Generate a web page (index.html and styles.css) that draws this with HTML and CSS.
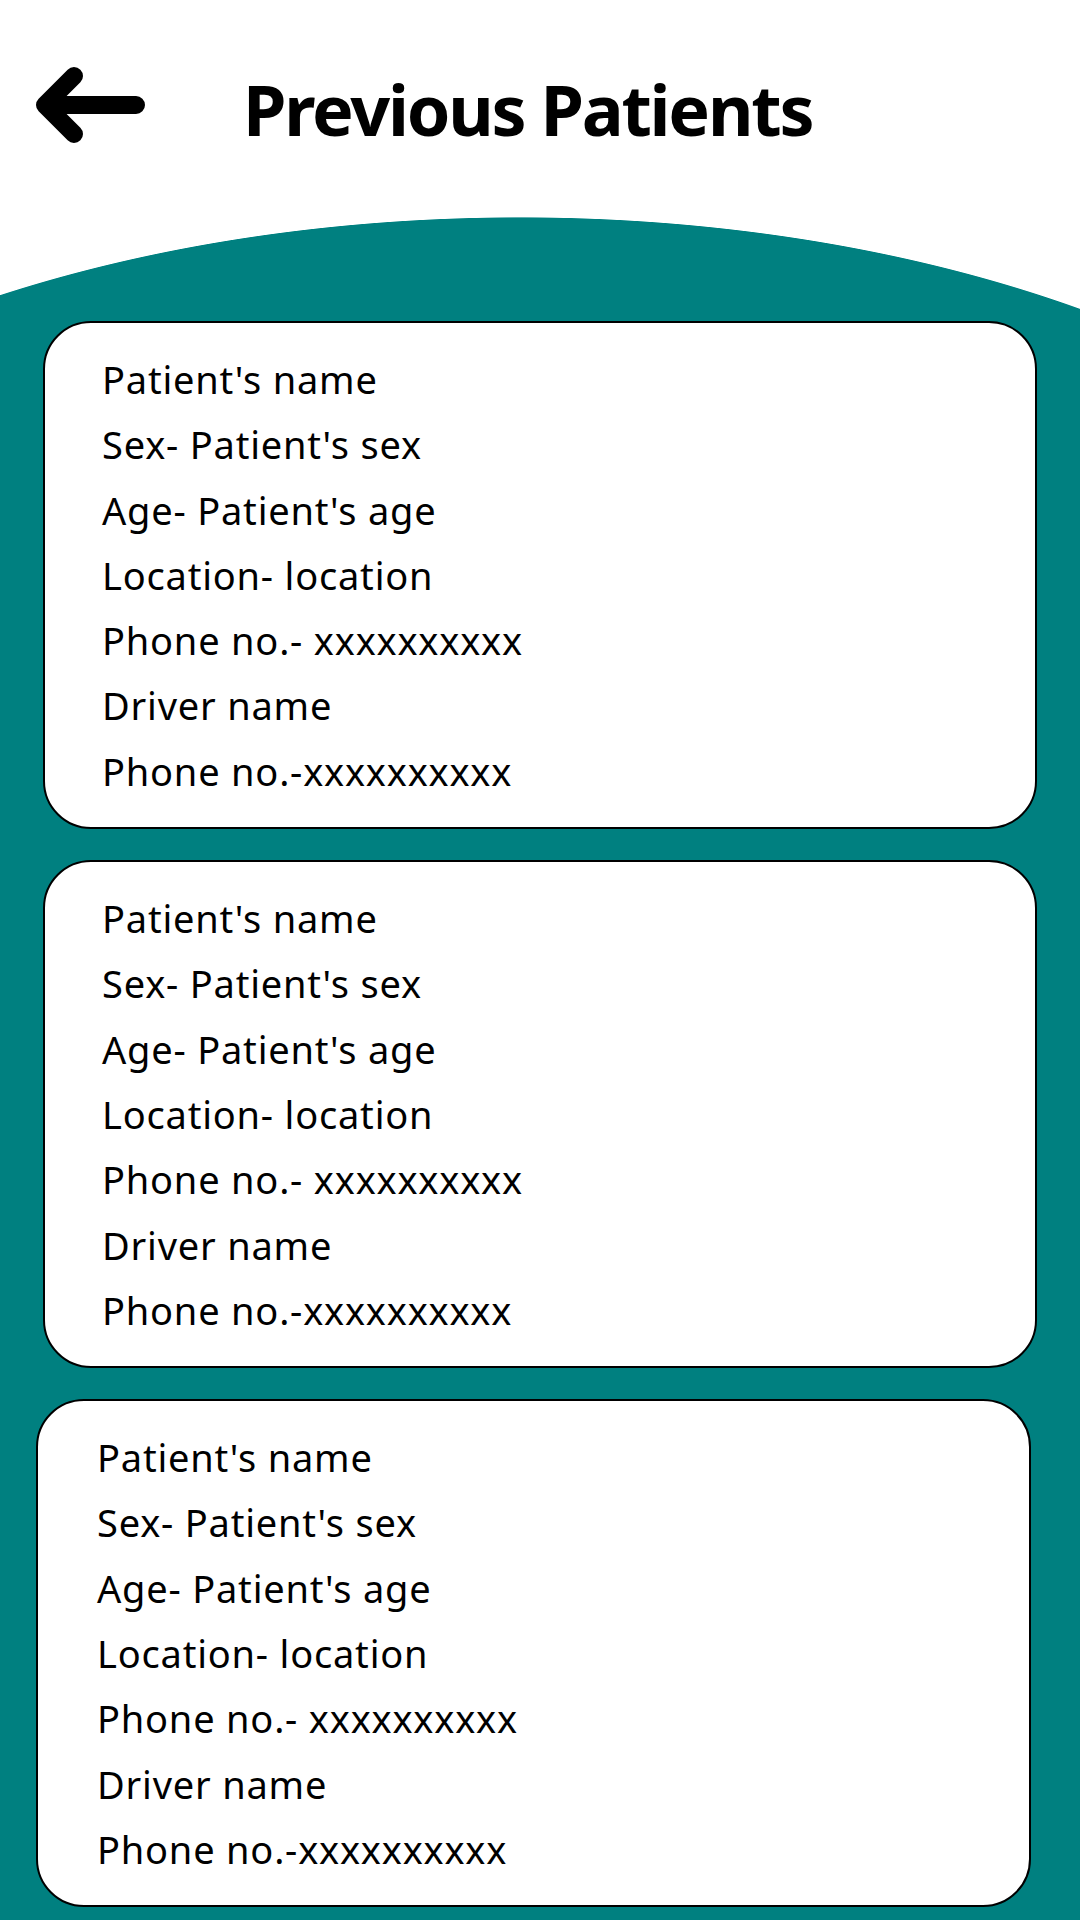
FILE: index.html
```html
<!DOCTYPE html>
<html lang="en">
<head>
<meta charset="utf-8">
<title>Previous Patients</title>
<link rel="stylesheet" href="styles.css">
</head>
<body>
<header class="topbar">
  <svg class="back-icon" width="124" height="90" viewBox="0 0 124 90" aria-hidden="true">
    <path d="M108 45 H17 M46 16 L17 45 L46 74" fill="none" stroke="#000" stroke-width="18" stroke-linecap="round" stroke-linejoin="round"/>
  </svg>
  <h1 class="title">Previous Patients</h1>
</header>
<main class="sheet">
  <section class="card">
    <p>Patient's name</p>
    <p>Sex- Patient's sex</p>
    <p>Age- Patient's age</p>
    <p>Location- location</p>
    <p>Phone no.- xxxxxxxxxx</p>
    <p>Driver name</p>
    <p>Phone no.-xxxxxxxxxx</p>
  </section>
  <section class="card">
    <p>Patient's name</p>
    <p>Sex- Patient's sex</p>
    <p>Age- Patient's age</p>
    <p>Location- location</p>
    <p>Phone no.- xxxxxxxxxx</p>
    <p>Driver name</p>
    <p>Phone no.-xxxxxxxxxx</p>
  </section>
  <section class="card card--shifted">
    <p>Patient's name</p>
    <p>Sex- Patient's sex</p>
    <p>Age- Patient's age</p>
    <p>Location- location</p>
    <p>Phone no.- xxxxxxxxxx</p>
    <p>Driver name</p>
    <p>Phone no.-xxxxxxxxxx</p>
  </section>
</main>
</body>
</html>
```

FILE: styles.css
```css
html, body {
  margin: 0;
  padding: 0;
  background: #ffffff;
}

body {
  font-family: "Noto Sans", "Open Sans", sans-serif;
  color: #000;
  width: 1080px;
  height: 1920px;
  overflow: hidden;
}

.topbar {
  box-sizing: border-box;
  height: 217px;
  display: flex;
  align-items: flex-start;
  padding: 60px 0 0 28px;
}

.back-icon {
  display: block;
  flex: none;
}

.title {
  margin: 14px 0 0 91px;
  font-family: "Noto Sans", sans-serif;
  font-weight: 700;
  font-size: 70px;
  line-height: 1;
  letter-spacing: -2.2px;
}

.sheet {
  box-sizing: border-box;
  width: 1080px;
  min-height: 1703px;
  padding-top: 104px;
  background:
    radial-gradient(1000px 533px at 520px 533px, #008080 calc(100% - 1.5px), rgba(0, 128, 128, 0) 100%) 0 0 / 1080px 533px no-repeat,
    linear-gradient(#008080, #008080) 0 533px / 1080px 1400px no-repeat;
  display: flex;
  flex-direction: column;
  gap: 31px;
}

.card {
  box-sizing: border-box;
  margin: 0 43px;
  padding: 24px 0 23px 57px;
  background: #fff;
  border: 2px solid #000;
  border-radius: 48px;
}

.card--shifted {
  margin: 0 49px 0 36px;
  padding-left: 59px;
}

.card p {
  margin: 0;
  font-size: 38px;
  line-height: 65.3px;
  letter-spacing: 0.8px;
  white-space: nowrap;
}
```
